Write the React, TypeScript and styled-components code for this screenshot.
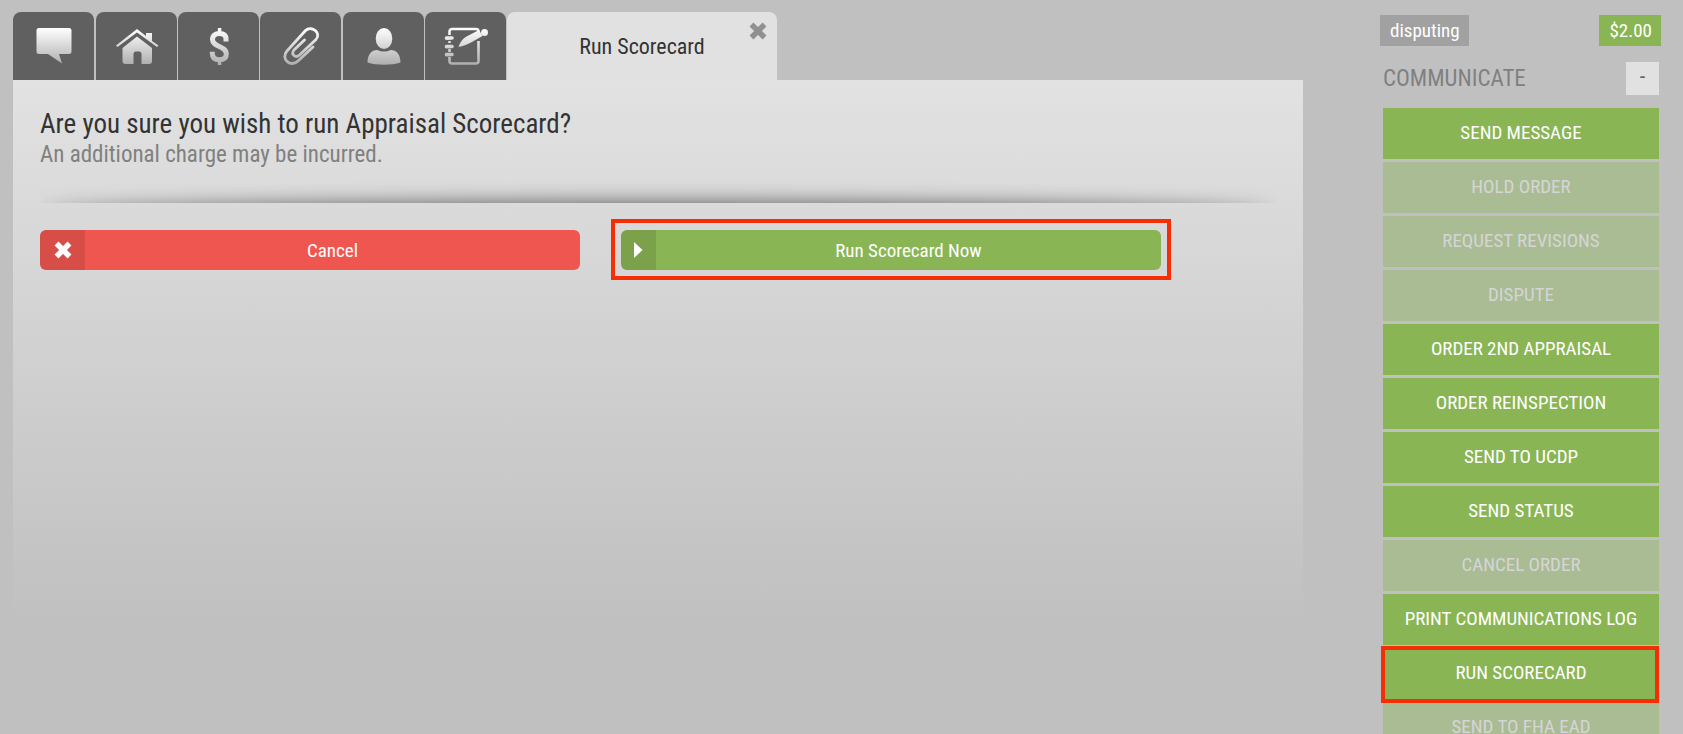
import React from "react";
import styled, { createGlobalStyle, css } from "styled-components";

const GlobalStyle = createGlobalStyle`
  *, *::before, *::after { box-sizing: border-box; }
  html, body, #root { height: 100%; }
  body {
    margin: 0;
    overflow: hidden;
    background: #c0c0c0;
    color: #333;
    font-family: "Roboto Condensed", "Liberation Sans Narrow", Roboto, sans-serif;
  }
  button { font: inherit; border: 0; padding: 0; cursor: pointer; }
  h1, h2, p, ul { margin: 0; padding: 0; font-weight: 400; }
`;

const Page = styled.div`
  display: flex;
  align-items: flex-start;
  gap: 77px;
  height: 100%;
  padding: 12px 22px 0 13px;
  overflow: hidden;
`;

const Main = styled.main`
  flex: 1;
  min-width: 0;
`;

const TabBar = styled.nav`
  display: flex;
  gap: 1px;
`;

const IconTab = styled.button`
  display: flex;
  align-items: center;
  justify-content: center;
  width: 81px;
  height: 68px;
  border-radius: 8px 8px 0 0;
  background: #606060;

  &:nth-child(3n + 1) { margin-right: 1px; }
`;

const ActiveTab = styled.div`
  position: relative;
  display: flex;
  width: 270px;
  height: 68px;
  border-radius: 8px 8px 0 0;
  background: #e1e1e1;
`;

const TabLabel = styled.button`
  flex: 1;
  padding-top: 2px;
  background: none;
  color: #333;
  font-size: 22px;
  line-height: 28px;
`;

const CloseButton = styled.button`
  position: absolute;
  top: 10px;
  right: 10px;
  display: flex;
  background: none;
`;

const Panel = styled.section`
  min-height: 540px;
  padding: 27px 27px 28px;
  background: linear-gradient(#e2e2e2, #c0c0c0);
`;

const Title = styled.h1`
  font-size: 27px;
  line-height: 34px;
`;

const Note = styled.p`
  color: #808080;
  font-size: 23px;
  line-height: 28px;
`;

const Divider = styled.div`
  position: relative;
  height: 20px;
  margin: 14px 0 27px;
  overflow: hidden;

  &::after {
    content: "";
    position: absolute;
    top: 100%;
    left: 4px;
    right: 4px;
    height: 24px;
    border-radius: 50%;
    box-shadow: 0 0 20px rgba(0, 0, 0, 0.6);
  }
`;

const Actions = styled.div`
  display: grid;
  grid-template-columns: repeat(2, minmax(0, 540px));
  gap: 41px;
`;

const highlight = css`
  &::after {
    content: "";
    position: absolute;
    inset: var(--ring-inset);
    border: 4px solid #f62e05;
    pointer-events: none;
  }
`;

const ActionButton = styled.button<{ $tone: string; $highlighted?: boolean }>`
  --ring-inset: -11px -10px -10px;
  position: relative;
  display: flex;
  height: 40px;
  border-radius: 6px;
  background: ${(p) => p.$tone};
  color: #fff;
  font-size: 19px;
  line-height: 42px;
  ${(p) => p.$highlighted && highlight}
`;

const ActionIcon = styled.span<{ $width: number }>`
  display: flex;
  align-items: center;
  justify-content: center;
  width: ${(p) => p.$width}px;
  height: 100%;
  border-radius: 6px 0 0 6px;
  background: rgba(0, 0, 0, 0.1);
`;

const ActionText = styled.span`
  flex: 1;
`;

const Sidebar = styled.aside`
  flex: none;
  width: 281px;
  padding-top: 3px;
`;

const Tags = styled.div`
  display: flex;
  justify-content: space-between;
`;

const Tag = styled.span<{ $tone: string }>`
  padding: 0 9px 0 10px;
  background: ${(p) => p.$tone};
  color: #fff;
  font-size: 19px;
  line-height: 31px;
`;

const Group = styled.section`
  padding: 16px 2px 0 3px;
`;

const GroupHeader = styled.header`
  display: flex;
  justify-content: space-between;
  align-items: center;
  margin-bottom: 13px;
`;

const GroupTitle = styled.h2`
  color: #808080;
  font-size: 23px;
  line-height: 33px;
`;

const ToggleButton = styled.button`
  width: 33px;
  height: 33px;
  padding-bottom: 4px;
  background: #e1e1e1;
  color: #606060;
  font-size: 22px;
`;

const CommandList = styled.ul`
  display: flex;
  flex-direction: column;
  gap: 3px;
  list-style: none;
`;

const CommandButton = styled.button<{ $highlighted?: boolean }>`
  --ring-inset: -2px 0 -4px -2px;
  position: relative;
  display: block;
  width: 100%;
  height: 51px;
  padding-bottom: 1px;
  background: #8ab554;
  color: #fff;
  font-size: 19px;
  line-height: 22px;
  text-transform: uppercase;
  z-index: ${(p) => (p.$highlighted ? 1 : 0)};
  ${(p) => p.$highlighted && highlight}

  &:disabled {
    background: #aabc94;
    color: #d5d5d5;
    cursor: default;
  }
`;

const fill = "url(#shine)";

const TabIcon = ({ children }: { children: React.ReactNode }) => (
  <svg width="44" height="40" viewBox="0 0 44 40" aria-hidden="true">
    <defs>
      <linearGradient id="shine" gradientUnits="userSpaceOnUse" x1="0" y1="2" x2="0" y2="38">
        <stop offset="0" stopColor="#ffffff" />
        <stop offset="1" stopColor="#b0b0b0" />
      </linearGradient>
    </defs>
    {children}
  </svg>
);

const tabs = [
  {
    label: "Messages",
    art: <path fill={fill} d="M7 2h30a2.500 2.500 0 0 1 2.500 2.500v21a2.500 2.500 0 0 1-2.500 2.500H27l3 9.500L16 28H7a2.500 2.500 0 0 1-2.500-2.500v-21A2.500 2.500 0 0 1 7 2z" />,
  },
  {
    label: "Property",
    art: (
      <>
        <path fill={fill} d="M7.500 22 22 10.500 37 22v13a3 3 0 0 1-3 3h-7.500V28a2.500 2.500 0 0 0-2.500-2.500h-3a2.500 2.500 0 0 0-2.500 2.500v10h-8a3 3 0 0 1-3-3z" />
        <path fill={fill} d="M22 3l9 7V7h6v8l6.500 4.500-1.500 1.500L22 6.500 2.500 21 1 19.500z" />
      </>
    ),
  },
  {
    label: "Fees",
    art: (
      <g fill="none" stroke={fill}>
        <path strokeWidth="5" d="M29 15.600V13c0-4-3-5.500-6.700-5.500s-6.800 2-6.800 6c0 8 13.800 6 13.800 14.500 0 4-2.800 5.700-7 5.700s-7-1.700-7-6.200v-1.800" />
        <path strokeWidth="3.500" d="M22.600 2l-.1 5M22.500 34l.1 5" />
      </g>
    ),
  },
  {
    label: "Attachments",
    art: (
      <path
        fill="none"
        stroke={fill}
        strokeWidth="2.800"
        strokeLinecap="round"
        d="M34 21 19 35C12 42 1 33 8 25L26.500 4.500C32-.5 43 6 37 13.500L20.500 29c-4 3.500-9-.5-5.500-5L25.500 14"
      />
    ),
  },
  {
    label: "Contacts",
    art: (
      <g fill={fill}>
        <ellipse cx="22" cy="12.500" rx="8.300" ry="10.500" />
        <path d="M5.500 36.500c0-8 4-12.500 10-12.500 4 2 9 2 13 0 6 0 10 4.500 10 12.500-8 3-25 3-33 0z" />
      </g>
    ),
  },
  {
    label: "Notes",
    art: (
      <>
        <path fill="none" stroke={fill} strokeWidth="2.600" d="M5.500 9V5.500A2.500 2.500 0 0 1 8 3h24a2.500 2.500 0 0 1 2.500 2.500V6M34.500 15v20a2.500 2.500 0 0 1-2.500 2.500H8A2.500 2.500 0 0 1 5.500 35v-4M5.500 15v2M5.500 23v3" />
        <path fill="none" stroke={fill} strokeWidth="3.600" strokeLinecap="round" d="M2.500 12.100 8 12M2.500 20.600l5.500-.1M2.500 28.600l5.500-.1" />
        <path fill={fill} d="M14.500 21c2-6 5-9 9-11L35 4l3.500 6-11.500 6.500c-4 2-8 4-12.500 4.500z" />
        <circle fill={fill} cx="40.500" cy="6.500" r="3.500" />
      </>
    ),
  },
];

const CrossIcon = ({ color }: { color: string }) => (
  <svg width="18" height="18" viewBox="0 0 18 18" aria-hidden="true">
    <path fill="none" stroke={color} strokeWidth="5.500" d="m2.500 2.500 13 13m0-13-13 13" />
  </svg>
);

const PlayIcon = () => (
  <svg width="10" height="16" viewBox="0 0 10 16" aria-hidden="true">
    <path fill="#fff" d="m0 0 8.500 8L0 16z" />
  </svg>
);

const commands = [
  { label: "Send Message" },
  { label: "Hold Order", disabled: true },
  { label: "Request Revisions", disabled: true },
  { label: "Dispute", disabled: true },
  { label: "Order 2nd Appraisal" },
  { label: "Order Reinspection" },
  { label: "Send to UCDP" },
  { label: "Send Status" },
  { label: "Cancel Order", disabled: true },
  { label: "Print Communications Log" },
  { label: "Run Scorecard", highlighted: true },
  { label: "Send to FHA EAD", disabled: true },
];

export default function App() {
  return (
    <>
      <GlobalStyle />
      <Page>
        <Main>
          <TabBar>
            {tabs.map((tab) => (
              <IconTab key={tab.label} type="button" aria-label={tab.label}>
                <TabIcon>{tab.art}</TabIcon>
              </IconTab>
            ))}
            <ActiveTab>
              <TabLabel type="button">Run Scorecard</TabLabel>
              <CloseButton type="button" aria-label="Close tab">
                <CrossIcon color="#909090" />
              </CloseButton>
            </ActiveTab>
          </TabBar>
          <Panel>
            <Title>Are you sure you wish to run Appraisal Scorecard?</Title>
            <Note>An additional charge may be incurred.</Note>
            <Divider />
            <Actions>
              <ActionButton type="button" $tone="#f05650">
                <ActionIcon $width={45}>
                  <CrossIcon color="#fff" />
                </ActionIcon>
                <ActionText>Cancel</ActionText>
              </ActionButton>
              <ActionButton type="button" $tone="#8ab554" $highlighted>
                <ActionIcon $width={35}>
                  <PlayIcon />
                </ActionIcon>
                <ActionText>Run Scorecard Now</ActionText>
              </ActionButton>
            </Actions>
          </Panel>
        </Main>
        <Sidebar>
          <Tags>
            <Tag $tone="#a1a1a1">disputing</Tag>
            <Tag $tone="#8ab554">$2.00</Tag>
          </Tags>
          <Group>
            <GroupHeader>
              <GroupTitle>COMMUNICATE</GroupTitle>
              <ToggleButton type="button" aria-label="Collapse section">-</ToggleButton>
            </GroupHeader>
            <CommandList>
              {commands.map((c) => (
                <li key={c.label}>
                  <CommandButton type="button" disabled={c.disabled} $highlighted={c.highlighted}>
                    {c.label}
                  </CommandButton>
                </li>
              ))}
            </CommandList>
          </Group>
        </Sidebar>
      </Page>
    </>
  );
}
